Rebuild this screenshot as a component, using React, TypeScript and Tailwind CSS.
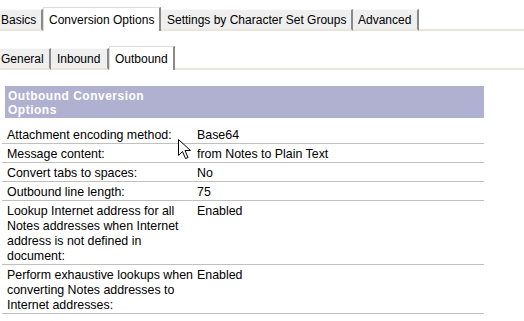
const font = "font-['Liberation_Sans',Arial,sans-serif]";

const Tab = ({
  label,
  active,
  width,
  pad,
}: {
  label: string;
  active?: boolean;
  width: string;
  pad: string;
}) => {
  if (active) {
    return (
      <div
        className={`${width} ${pad} h-[24px] bg-white border-t border-l border-[#dcdcdc] border-r-2 border-r-[#8a8a8a] leading-[24px]`}
      >
        {label}
      </div>
    );
  }
  return (
    <div
      className={`${width} ${pad} h-[22px] bg-[#efefef] border-t border-t-[#fafafa] border-r-2 border-r-[#8a8a8a] border-b-2 border-b-[#e8e6dc] leading-[20px]`}
    >
      {label}
    </div>
  );
};

const rows: { label: React.ReactNode; value: string }[] = [
  { label: "Attachment encoding method:", value: "Base64" },
  { label: "Message content:", value: "from Notes to Plain Text" },
  { label: "Convert tabs to spaces:", value: "No" },
  { label: "Outbound line length:", value: "75" },
  {
    label: (
      <>
        Lookup Internet address for all
        <br />
        Notes addresses when Internet
        <br />
        address is not defined in
        <br />
        document:
      </>
    ),
    value: "Enabled",
  },
  {
    label: (
      <>
        Perform exhaustive lookups when
        <br />
        converting Notes addresses to
        <br />
        Internet addresses:
      </>
    ),
    value: "Enabled",
  },
];

const App = () => {
  return (
    <div
      className={`relative w-[524px] h-[321px] overflow-hidden bg-white text-black text-[12px] ${font}`}
    >
      {/* top tabs */}
      <div className="flex items-end mt-[7px] h-[24px] whitespace-nowrap">
        <Tab label="Basics" width="w-[43px]" pad="pl-[1px]" />
        <Tab label="Conversion Options" active width="w-[118px]" pad="pl-[5px]" />
        <Tab label="Settings by Character Set Groups" width="w-[192px]" pad="pl-[6px]" />
        <Tab label="Advanced" width="w-[66px]" pad="pl-[5px]" />
        <div className="flex-1 h-[2px] bg-[#e8e6dc]" />
      </div>

      {/* sub tabs */}
      <div className="flex items-end mt-[15px] h-[24px] whitespace-nowrap">
        <Tab label="General" width="w-[51px]" pad="pl-[1px]" />
        <Tab label="Inbound" width="w-[58px]" pad="pl-[6px]" />
        <Tab label="Outbound" active width="w-[66px]" pad="pl-[5px]" />
        <div className="flex-1 h-[2px] bg-[#e8e6dc]" />
      </div>

      {/* section header */}
      <div className="ml-[5px] mt-[16px] w-[479px] h-[32px] bg-[#b0b0d0] pl-[3px] pt-[3px] text-white font-bold leading-[14px] tracking-[0.5px]">
        Outbound Conversion
        <br />
        Options
      </div>

      {/* settings */}
      <div className="ml-[2px] mt-[7px] w-[482px] text-[12.4px]">
        {rows.map((row, i) => (
          <div
            key={i}
            className="flex border-b border-[#c0c0c0] pt-[3px] leading-[15px]"
          >
            <div className="w-[195px] pl-[5px] whitespace-nowrap">{row.label}</div>
            <div className="flex-1">{row.value}</div>
          </div>
        ))}
      </div>

      {/* mouse pointer */}
      <svg
        className="absolute left-[178px] top-[139px]"
        width="13"
        height="21"
        viewBox="0 0 13 21"
      >
        <path
          d="M0.5 0.5 L0.5 16.5 L4.5 12.5 L7.5 19.5 L10 18.5 L7 11.5 L12.5 11.5 Z"
          fill="white"
          stroke="black"
          strokeWidth="1"
        />
      </svg>
    </div>
  );
};

export default App;
